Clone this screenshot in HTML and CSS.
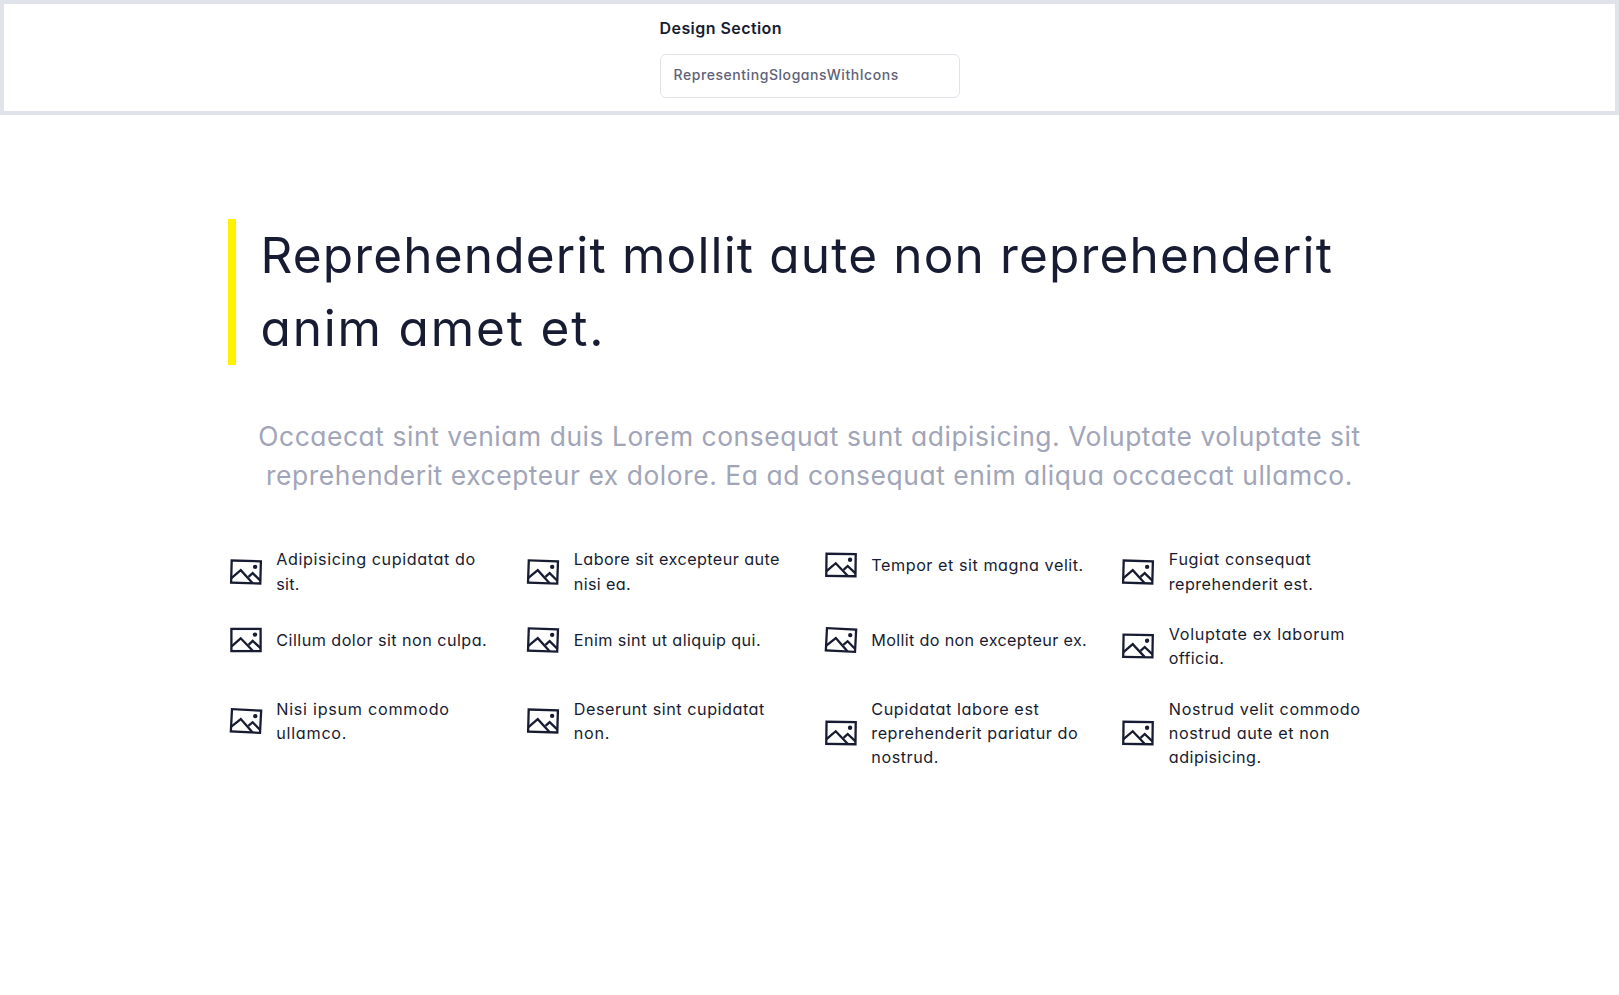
FILE: index.html
```
<!DOCTYPE html>
<html lang="en">
<head>
<meta charset="utf-8">
<title>Design Section</title>
<link rel="stylesheet" href="styles.css">
</head>
<body>
<svg width="0" height="0" class="defs">
  <symbol id="picture" viewBox="0 0 36 36">
    <g fill="none" stroke="currentColor" stroke-width="2.3">
      <rect x="3.4" y="6.9" width="29.2" height="22.2"/>
      <path d="M3.6 24.4 L12.7 16.3 L25 29"/>
      <path d="M20.6 22.8 L24.7 18.9 L32.6 26.2"/>
    </g>
    <circle cx="27" cy="12.6" r="2.2" fill="currentColor"/>
  </symbol>
</svg>
<header class="topbar">
  <div class="field">
    <label class="field-label">Design Section</label>
    <div class="field-select">RepresentingSlogansWithIcons</div>
  </div>
</header>
<main class="content">
  <h1 class="title"><span class="line title-a">Reprehenderit mollit aute non reprehenderit</span><span class="line title-b">anim amet et.</span></h1>
  <p class="subtitle"><span class="line">Occaecat sint veniam duis Lorem consequat sunt adipisicing. Voluptate voluptate sit</span><span class="line">reprehenderit excepteur ex dolore. Ea ad consequat enim aliqua occaecat ullamco.</span></p>
  <ul class="slogans">
    <li class="slogan"><svg class="icon tilt-3"><use href="#picture"/></svg><p><span class="line s6">Adipisicing cupidatat do</span><span class="line s2">sit.</span></p></li>
    <li class="slogan"><svg class="icon tilt-4"><use href="#picture"/></svg><p><span class="line s4">Labore sit excepteur aute</span><span class="line s3">nisi ea.</span></p></li>
    <li class="slogan"><svg class="icon tilt-1"><use href="#picture"/></svg><p><span class="line s55">Tempor et sit magna velit.</span></p></li>
    <li class="slogan"><svg class="icon tilt-3"><use href="#picture"/></svg><p><span class="line s6">Fugiat consequat</span><span class="line s5">reprehenderit est.</span></p></li>
    <li class="slogan"><svg class="icon"><use href="#picture"/></svg><p><span class="line s5">Cillum dolor sit non culpa.</span></p></li>
    <li class="slogan"><svg class="icon tilt-4"><use href="#picture"/></svg><p><span class="line s4">Enim sint ut aliquip qui.</span></p></li>
    <li class="slogan"><svg class="icon tilt-6"><use href="#picture"/></svg><p><span class="line s3">Mollit do non excepteur ex.</span></p></li>
    <li class="slogan"><svg class="icon tilt-2"><use href="#picture"/></svg><p><span class="line s65">Voluptate ex laborum</span><span class="line s3">officia.</span></p></li>
    <li class="slogan"><svg class="icon tilt-6"><use href="#picture"/></svg><p><span class="line s7">Nisi ipsum commodo</span><span class="line s7">ullamco.</span></p></li>
    <li class="slogan"><svg class="icon tilt-3"><use href="#picture"/></svg><p><span class="line s55">Deserunt sint cupidatat</span><span class="line s7">non.</span></p></li>
    <li class="slogan"><svg class="icon tilt-1"><use href="#picture"/></svg><p><span class="line s6">Cupidatat labore est</span><span class="line s55">reprehenderit pariatur do</span><span class="line s55">nostrud.</span></p></li>
    <li class="slogan"><svg class="icon tilt-1"><use href="#picture"/></svg><p><span class="line s65">Nostrud velit commodo</span><span class="line s6">nostrud aute et non</span><span class="line s5">adipisicing.</span></p></li>
  </ul>
</main>
</body>
</html>
```
FILE: styles.css
```
* { box-sizing: border-box; margin: 0; padding: 0; }
body {
  background: #fff;
  color: #181c32;
  font-family: Inter, "Open Sans", sans-serif;
  font-feature-settings: "cv11";
}
.defs { position: absolute; }
.line { display: block; white-space: nowrap; }

.topbar {
  height: 115px;
  border: 4px solid #e1e3ea;
  display: flex;
  justify-content: center;
}
.field { width: 300px; padding-top: 12px; }
.field-label {
  display: block;
  height: 38px;
  font-size: 16px;
  font-weight: 600;
  line-height: 24px;
  letter-spacing: .44px;
}
.field-select {
  height: 44px;
  border: 1px solid #e1e3ea;
  border-radius: 6px;
  padding-left: 13px;
  color: #5e6278;
  font-size: 14px;
  font-weight: 500;
  line-height: 40px;
  letter-spacing: .56px;
}

.content { padding: 104px 0 0 228px; }
.title {
  height: 146px;
  border-left: 8px solid #fff200;
  padding-left: 24.5px;
  font-size: 49.54px;
  font-weight: 400;
  line-height: 72.86px;
}
.title-a { letter-spacing: 1.16px; }
.title-b { letter-spacing: 1.83px; }
.subtitle {
  width: 1163px;
  margin-top: 52px;
  color: #a1a5b7;
  font-size: 26.4px;
  line-height: 38.86px;
  letter-spacing: .565px;
  text-align: center;
}
.slogans {
  display: grid;
  grid-template-columns: repeat(4, 297.5px);
  row-gap: 26.2px;
  align-items: start;
  margin-top: 52.5px;
  list-style: none;
}
.slogan {
  display: flex;
  align-items: center;
  gap: 12.3px;
  font-size: 16.19px;
  line-height: 24.29px;
}
.icon { flex: none; width: 36px; height: 36px; }
.slogan:nth-child(even) .icon { margin: 0 .6px 0 -.6px; }
.tilt-1 { transform: rotate(.7deg); }
.tilt-2 { transform: rotate(1deg); }
.tilt-3 { transform: rotate(1.5deg); }
.tilt-4 { transform: rotate(2deg); }
.tilt-6 { transform: rotate(3deg); }
.s2 { letter-spacing: .209px; }
.s3 { letter-spacing: .325px; }
.s4 { letter-spacing: .41px; }
.s5 { letter-spacing: .45px; }
.s55 { letter-spacing: .53px; }
.s6 { letter-spacing: .58px; }
.s65 { letter-spacing: .64px; }
.s7 { letter-spacing: .72px; }
```
